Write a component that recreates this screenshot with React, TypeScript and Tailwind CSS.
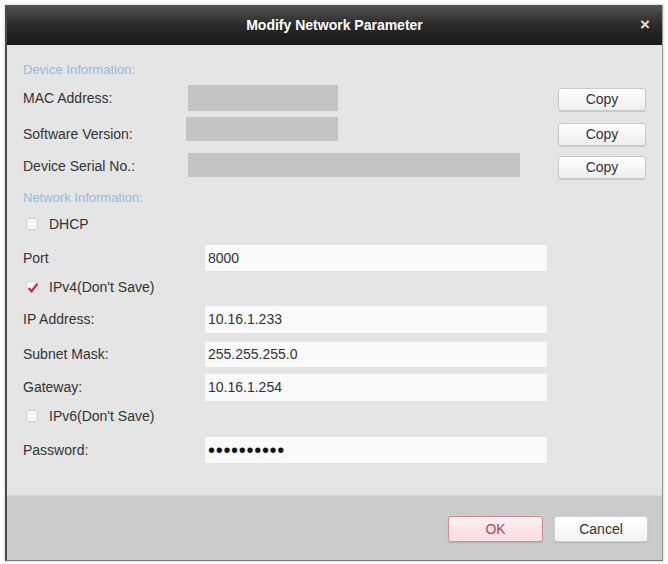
import React from "react";

const font = { fontFamily: '"Liberation Sans", Arial, sans-serif' };

function CopyBtn({ mt }: { mt: string }) {
  return (
    <button
      className={`ml-auto ${mt} h-[23px] w-[88px] shrink-0 rounded-[3px] border border-[#c9c9c9] bg-gradient-to-b from-[#ffffff] to-[#eeeeee] text-[14px] text-[#333] shadow-[0_1px_1px_rgba(0,0,0,0.12)]`}
    >
      Copy
    </button>
  );
}

function Check({ checked }: { checked?: boolean }) {
  return (
    <span className="relative ml-[3px] inline-block h-[12px] w-[12px] shrink-0 rounded-[2px] border border-[#d6d6d6] bg-[#f6f6f6]">
      {checked && (
        <svg viewBox="0 0 12 12" className="absolute left-[0px] top-[0px] h-[12px] w-[12px]">
          <path d="M2.2 6.8 L4.6 9.4 L9.8 2.4" fill="none" stroke="#c42a3e" strokeWidth="2.4" strokeLinecap="round" strokeLinejoin="round" />
        </svg>
      )}
    </span>
  );
}

function Field({ label, value, mt, inputMt, inputH, pw }: { label: string; value: string; mt: string; inputMt: string; inputH: string; pw?: boolean }) {
  return (
    <div className={`flex h-[28px] items-start ${mt}`}>
      <div className="flex h-[28px] w-[182px] shrink-0 items-center text-[14px] text-[#333]">{label}</div>
      <div className={`${inputMt} ${inputH} flex w-[342px] items-center bg-[#fafafa] pl-[3px] text-[14px] text-[#333]`}>
        {pw ? <span className="text-[20px] leading-none tracking-[0.7px] text-[#111]">••••••••••</span> : value}
      </div>
    </div>
  );
}

function CheckRow({ label, checked, mt }: { label: string; checked?: boolean; mt: string }) {
  return (
    <div className={`flex h-[24px] items-center gap-[11px] ${mt} text-[14px] text-[#333]`}>
      <Check checked={checked} />
      <span>{label}</span>
    </div>
  );
}

export default function App() {
  return (
    <div className="h-[564px] w-[668px] bg-white pl-[5px] pt-[5px]" style={font}>
      <div className="flex h-[556px] w-[658px] flex-col border-b border-l-2 border-r border-b-[#7a7a7a] border-l-[#4a4a4a] border-r-[#9a9a9a] shadow-[0_0_3px_rgba(0,0,0,0.25)]">
        <div className="relative flex h-[40px] shrink-0 items-center justify-center bg-gradient-to-b from-[#555555] via-[#2a2a2a] to-[#191919]">
          <span className="text-[14px] font-bold text-white">Modify Network Parameter</span>
          <span className="absolute right-[12px] top-[11px] text-[17px] font-bold leading-none text-[#e6e6e6]">×</span>
        </div>
        <div className="flex h-[450px] shrink-0 flex-col bg-[#e5e5e5] pl-[16px] pr-[16px] pt-[15px]">
          <div className="flex h-[20px] items-center text-[13px] text-[#93bbdd]">Device Information:</div>
          <div className="mt-[4px] flex h-[28px] items-start">
            <div className="flex h-[28px] w-[165px] shrink-0 items-center text-[14px] text-[#333]">MAC Address:</div>
            <div className="mt-[1px] h-[26px] w-[150px] bg-[#c4c4c4]" />
            <CopyBtn mt="mt-[4px]" />
          </div>
          <div className="mt-[4px] flex h-[28px] items-start">
            <div className="flex h-[32px] w-[163px] shrink-0 items-center pt-[4px] text-[14px] text-[#333]">Software Version:</div>
            <div className="mt-[1px] h-[24px] w-[152px] bg-[#c4c4c4]" />
            <CopyBtn mt="mt-[7px]" />
          </div>
          <div className="mt-[8px] flex h-[28px] items-start">
            <div className="flex h-[28px] w-[165px] shrink-0 items-center text-[14px] text-[#333]">Device Serial No.:</div>
            <div className="mt-[1px] h-[24px] w-[332px] bg-[#c4c4c4]" />
            <CopyBtn mt="mt-[4px]" />
          </div>
          <div className="mt-[8px] flex h-[20px] items-center text-[13px] text-[#93bbdd]">Network Information:</div>
          <CheckRow label="DHCP" mt="mt-[4px]" />
          <Field label="Port" value="8000" mt="mt-[8px]" inputMt="mt-[1px]" inputH="h-[26px]" />
          <CheckRow label="IPv4(Don't Save)" checked mt="mt-[3px]" />
          <Field label="IP Address:" value="10.16.1.233" mt="mt-[6px]" inputMt="mt-[1px]" inputH="h-[27px]" />
          <Field label="Subnet Mask:" value="255.255.255.0" mt="mt-[7px]" inputMt="mt-[2px]" inputH="h-[25px]" />
          <Field label="Gateway:" value="10.16.1.254" mt="mt-[5px]" inputMt="mt-[1px]" inputH="h-[27px]" />
          <CheckRow label="IPv6(Don't Save)" mt="mt-[3px]" />
          <Field label="Password:" value="" pw mt="mt-[8px]" inputMt="mt-[1px]" inputH="h-[26px]" />
        </div>
        <div className="flex flex-1 items-start justify-end gap-[11px] border-t border-t-[#d6d6d6] bg-[#cbcbcb] pr-[14px] pt-[20px]">
          <button className="h-[26px] w-[95px] rounded-[3px] border border-[#d58d9b] bg-gradient-to-b from-[#fdf0f2] to-[#f8dde2] text-[14px] text-[#b0485a] shadow-[0_1px_1px_rgba(0,0,0,0.12)]">
            OK
          </button>
          <button className="h-[26px] w-[94px] rounded-[3px] border border-[#d0d0d0] bg-gradient-to-b from-[#ffffff] to-[#f2f2f2] text-[14px] text-[#333] shadow-[0_1px_1px_rgba(0,0,0,0.12)]">
            Cancel
          </button>
        </div>
      </div>
    </div>
  );
}
